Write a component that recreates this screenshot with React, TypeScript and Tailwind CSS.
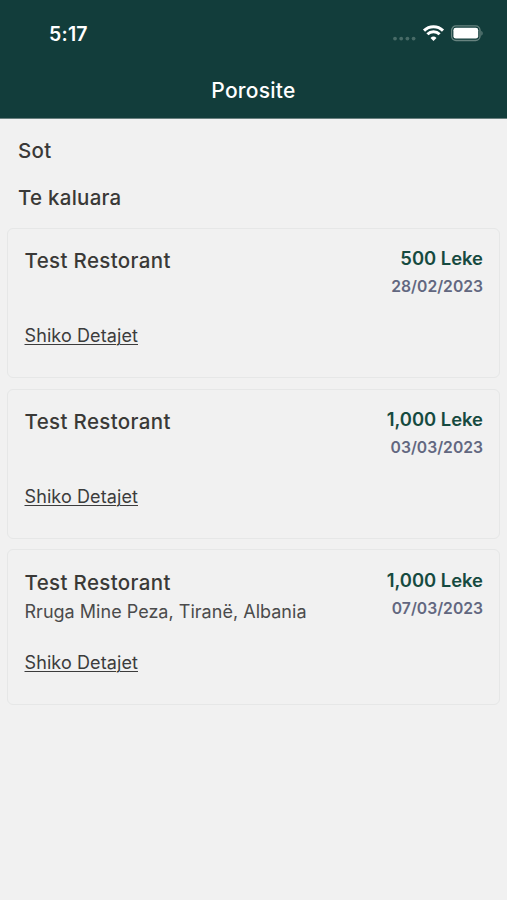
interface Order {
  price: string;
  date: string;
  address?: string;
}

const orders: Order[] = [
  { price: "500 Leke", date: "28/02/2023" },
  { price: "1,000 Leke", date: "03/03/2023" },
  { price: "1,000 Leke", date: "07/03/2023", address: "Rruga Mine Peza, Tiranë, Albania" },
];

function StatusIcons() {
  return (
    <svg width="92" height="20" viewBox="0 0 92 20" className="block">
      <g fill="#486b67">
        <circle cx="4" cy="14.6" r="1.9" />
        <circle cx="10.2" cy="14.6" r="1.9" />
        <circle cx="16.4" cy="14.6" r="1.9" />
        <circle cx="22.6" cy="14.6" r="1.9" />
      </g>
      <g fill="none" stroke="#fff" strokeWidth="3">
        <path d="M33 6.6a13.6 13.6 0 0 1 19 0" />
        <path d="M36.4 10.3a8.7 8.7 0 0 1 12.2 0" />
      </g>
      <path d="M42.5 17l-3-3.1a4.3 4.3 0 0 1 6 0z" fill="#fff" />
      <rect x="60.6" y="1.9" width="28.4" height="14.6" rx="4.4" fill="none" stroke="#688480" strokeWidth="1.3" />
      <rect x="62.4" y="3.8" width="24.8" height="10.8" rx="2.4" fill="#fff" />
      <path d="M90.4 7c1.6.7 1.6 4 0 4.7z" fill="#688480" />
    </svg>
  );
}

function OrderCard({ order, className }: { order: Order; className: string }) {
  return (
    <article className={`flex justify-between rounded-md border border-[#e6e7e7] bg-[#f1f1f1] px-4 ${className}`}>
      <div className="flex flex-col items-start pl-[0.5px]">
        <h3 className="text-[20.5px] leading-7 font-medium tracking-[0.35px] text-[#3a3937]">Test Restorant</h3>
        {order.address && <p className="mt-px text-[18px] leading-7 tracking-[0.02px] text-[#4b4b4b]">{order.address}</p>}
        <a className={`${order.address ? "mt-[25px]" : "mt-[49px]"} text-[18px] leading-6 tracking-[0.1px] text-[#3c3c3c] underline decoration-1 underline-offset-2`}>
          Shiko Detajet
        </a>
      </div>
      <div className="flex flex-col items-end">
        <span className="text-[18.4px] leading-[22px] font-semibold text-[#164a40]">{order.price}</span>
        <span className="mt-2 text-[15.7px] leading-5 font-semibold text-[#626780]">{order.date}</span>
      </div>
    </article>
  );
}

export default function App() {
  return (
    <div className="h-[900px] w-[507px] overflow-hidden bg-[#f1f1f1] font-['Inter',sans-serif]">
      <header className="h-[119px] border-b border-[#687f7e] bg-[#123d3b] text-white">
        <div className="flex h-[67px] items-center justify-between pr-6 pl-[49px]">
          <span className="text-[19.5px] leading-6 font-semibold tracking-[0.2px]">5:17</span>
          <StatusIcons />
        </div>
        <h1 className="text-center text-[21px] leading-[48px] font-medium tracking-[0.25px]">Porosite</h1>
      </header>
      <main>
        <h2 className="mt-[18px] ml-[18px] text-[20.5px] leading-7 font-medium tracking-[0.25px] text-[#3a3937]">Sot</h2>
        <h2 className="mt-[19px] ml-[18px] text-[20.5px] leading-7 font-medium tracking-[0.25px] text-[#3a3937]">Te kaluara</h2>
        <section className="mt-4 flex flex-col px-[7px]">
          <OrderCard order={orders[0]} className="h-[150px] pt-[18px]" />
          <OrderCard order={orders[1]} className="mt-[11px] h-[150px] pt-[18px]" />
          <OrderCard order={orders[2]} className="mt-2.5 h-[156px] pt-[19px]" />
        </section>
      </main>
    </div>
  );
}
